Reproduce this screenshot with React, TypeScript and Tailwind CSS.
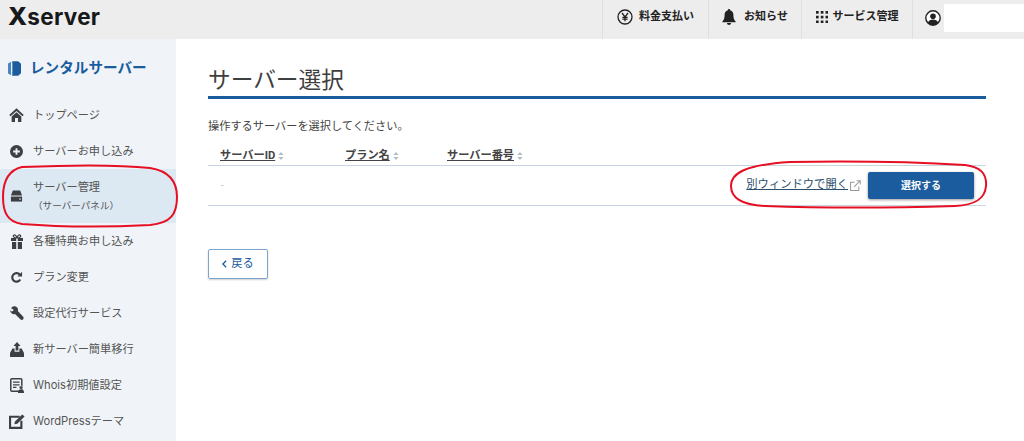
import React from 'react';

const FONT = "font-['Roboto','Noto_Sans_CJK_JP',sans-serif]";
const MENU_FONT = "font-['Inter','Noto_Sans_CJK_JP',sans-serif]";

function HomeIcon() {
  return (
    <svg viewBox="0 0 16 15" className="h-[14px] w-[15px]" fill="#3c4043">
      <path d="M8 .4 L15.8 7.4 L14.4 8.8 L8 3.2 L1.6 8.8 L.2 7.4 Z" />
      <path d="M2.8 9.2 L8 4.6 L13.2 9.2 V15 H9.6 V10.8 H6.4 V15 H2.8 Z" />
    </svg>
  );
}

function PlusIcon() {
  return (
    <svg viewBox="0 0 14 14" className="h-[13px] w-[13px]">
      <circle cx="7" cy="7" r="7" fill="#3c4043" />
      <path d="M7 3.4v7.2M3.4 7h7.2" stroke="#f0f4f8" strokeWidth="2" />
    </svg>
  );
}

function ServerIcon() {
  return (
    <svg viewBox="0 0 14 14" className="h-[14px] w-[13px]" fill="#3c4043">
      <path d="M3 1 H11 L13 6.4 H1 Z" />
      <path d="M1 7.6 H13 V13 H1 Z" />
      <rect x="10" y="9.6" width="1.6" height="1.4" fill="#dce8f2" />
    </svg>
  );
}

function GiftIcon() {
  return (
    <svg viewBox="0 0 14 15" className="h-[15px] w-[14px]" fill="#3c4043">
      <path d="M1 4 H6.2 V7 H1 Z M7.8 4 H13 V7 H7.8 Z M2 8 H6.2 V15 H2 Z M7.8 8 H12 V15 H7.8 Z" />
      <path d="M7 4 C4 4 2.8 2.6 3.6 1.4 C4.6 .2 6.4 1.4 7 4 C7.6 1.4 9.4 .2 10.4 1.4 C11.2 2.6 10 4 7 4 Z" fill="none" stroke="#3c4043" strokeWidth="1.2" />
    </svg>
  );
}

function RefreshIcon() {
  return (
    <svg viewBox="0 0 14 14" className="h-[13px] w-[13px]" fill="none">
      <path d="M11 9.2 A4.6 4.6 0 1 1 10.6 4" stroke="#3c4043" strokeWidth="2.4" />
      <path d="M8 5.8 H13 V.8 Z" fill="#3c4043" />
    </svg>
  );
}

function WrenchIcon() {
  return (
    <svg viewBox="0 0 14 14" className="h-[14px] w-[14px]" fill="#3c4043">
      <path d="M5.2 .3 A3.8 3.8 0 0 0 1 2.2 L3.4 3.6 L3.2 5 L1.8 5.6 L.2 4.2 A3.8 3.8 0 0 0 5 8 L10.6 13.6 C11.4 14.2 12.6 14 13.2 13.2 C13.8 12.4 13.8 11.4 13 10.6 L7.8 5 A3.8 3.8 0 0 0 5.2 .3 Z" />
    </svg>
  );
}

function UploadIcon() {
  return (
    <svg viewBox="0 0 14 15" className="h-[15px] w-[14px]" fill="#3c4043">
      <path d="M7 0 L10.6 4 H8.4 V8.6 H5.6 V4 H3.4 Z" />
      <path d="M2.4 6.6 H4.6 V9.8 H9.4 V6.6 H11.6 L14 11 V15 H0 V11 Z" />
    </svg>
  );
}

function WhoisIcon() {
  return (
    <svg viewBox="0 0 14 15" className="h-[15px] w-[14px]">
      <rect x=".8" y=".8" width="11" height="12.4" rx="1" fill="none" stroke="#3c4043" strokeWidth="1.5" />
      <path d="M3 4.2h6.6M3 6.8h6.6M3 9.4h3.4" stroke="#3c4043" strokeWidth="1.2" />
      <circle cx="11" cy="9.6" r="1.8" fill="#3c4043" stroke="#f0f4f8" strokeWidth=".5" />
      <path d="M8 15 C8 12 9.4 11.6 11 11.6 C12.6 11.6 14 12 14 15 Z" fill="#3c4043" />
    </svg>
  );
}

function EditIcon() {
  return (
    <svg viewBox="0 0 15 14" className="h-[15px] w-[16px]">
      <path d="M10 2.6 H1 V13 H11.6 V6.4" fill="none" stroke="#3c4043" strokeWidth="2" />
      <path d="M5 9.6 L5.6 7 L12.4 .4 L14.6 2.4 L7.8 9 Z" fill="#3c4043" />
    </svg>
  );
}

function YenIcon() {
  return (
    <svg viewBox="0 0 16 16" className="h-[16px] w-[16px]" fill="none" stroke="#222">
      <circle cx="8" cy="8" r="7" strokeWidth="1.3" />
      <path d="M5 4 L8 8 L11 4 M8 8 V12.2 M5.4 8.4 H10.6 M5.4 10.2 H10.6" strokeWidth="1.3" />
    </svg>
  );
}

function BellIcon() {
  return (
    <svg viewBox="0 0 14 16" className="h-[16px] w-[14px]" fill="#222">
      <path d="M7 0 C7.8 0 8.2 .6 8.2 1.3 C10.4 1.9 11.4 3.8 11.4 6 C11.4 9 12 10.8 13.6 12.4 V13.2 H.4 V12.4 C2 10.8 2.6 9 2.6 6 C2.6 3.8 3.6 1.9 5.8 1.3 C5.8 .6 6.2 0 7 0 Z" />
      <path d="M5 14 H9 C9 15.2 8.2 16 7 16 C5.8 16 5 15.2 5 14 Z" />
    </svg>
  );
}

function GridIcon() {
  const dots = [0, 5, 10];
  return (
    <svg viewBox="0 0 12.6 12.6" className="h-[12px] w-[12px]" fill="#222">
      {dots.map((y) => dots.map((x) => <rect key={`${x}-${y}`} x={x} y={y} width="2.8" height="2.8" />))}
    </svg>
  );
}

function UserIcon() {
  return (
    <svg viewBox="0 0 16 16" className="h-[16px] w-[16px]">
      <circle cx="8" cy="8" r="7.2" fill="#fff" stroke="#222" strokeWidth="1.4" />
      <circle cx="8" cy="6.2" r="2.8" fill="#222" />
      <path d="M2.8 13 C3.6 10.4 5.6 9.6 8 9.6 C10.4 9.6 12.4 10.4 13.2 13 C11.8 14.4 10 15 8 15 C6 15 4.2 14.4 2.8 13 Z" fill="#222" />
    </svg>
  );
}

function BookIcon() {
  return (
    <svg viewBox="0 0 14 16" className="h-[15px] w-[13px]">
      <path d="M4.6 .2 H11 L14 3 V13 L11 15.8 H4.6 Z" fill="#1b5c9e" />
      <path d="M0 2.6 L3.4 .6 V15.4 L0 13.4 Z" fill="#4d86bf" />
      <path d="M4 2.5v11" stroke="#fff" strokeWidth="1" strokeDasharray="1.4 1.2" />
    </svg>
  );
}

function ExternalIcon() {
  return (
    <svg viewBox="0 0 12 12" className="h-[11px] w-[11px]" fill="none" stroke="#9a9a9a" strokeWidth="1.1">
      <path d="M9.6 7v4.4H.6V2.4H5" />
      <path d="M4.4 7.6 L11 1 M7.2 .8 H11.2 V4.8" />
    </svg>
  );
}

function SortIcon() {
  return (
    <svg viewBox="0 0 6 9" className="ml-[3px] h-[8px] w-[6px]" fill="#b4bcc4">
      <path d="M3 0 L6 3.4 H0 Z M3 9 L0 5.6 H6 Z" />
    </svg>
  );
}

const menu = [
  { label: 'トップページ', icon: <HomeIcon /> },
  { label: 'サーバーお申し込み', icon: <PlusIcon /> },
  { label: 'サーバー管理', sub: '（サーバーパネル）', icon: <ServerIcon />, active: true },
  { label: '各種特典お申し込み', icon: <GiftIcon /> },
  { label: 'プラン変更', icon: <RefreshIcon /> },
  { label: '設定代行サービス', icon: <WrenchIcon /> },
  { label: '新サーバー簡単移行', icon: <UploadIcon /> },
  { label: 'Whois初期値設定', icon: <WhoisIcon /> },
  { label: 'WordPressテーマ', icon: <EditIcon /> },
];

const headerLinks = [
  { label: '料金支払い', icon: <YenIcon />, w: 'w-[106px]', gap: 'gap-[6px]' },
  { label: 'お知らせ', icon: <BellIcon />, w: 'w-[93px]', gap: 'gap-[8px]' },
  { label: 'サービス管理', icon: <GridIcon />, w: 'w-[111px]', gap: 'gap-[5px]' },
];

export default function App() {
  return (
    <div className={`${FONT} relative h-[441px] w-[1024px] overflow-hidden bg-white`}>
      <header className="flex h-[39px] items-center justify-between bg-[#ededed]">
        <div className="pb-[6px] pl-[8px] font-['Inter',sans-serif] text-[22.5px] font-bold leading-none tracking-[0.3px] text-[#16181a]">
          <span className="text-[25px] font-extrabold">X</span>server
        </div>
        <div className="flex h-full items-center">
          {headerLinks.map((l) => (
            <div key={l.label} className={`flex h-full items-center justify-center border-l border-[#dfdfdf] pb-[5px] text-[11px] font-bold text-[#222] ${l.w} ${l.gap}`}>
              {l.icon}
              <span>{l.label}</span>
            </div>
          ))}
          <div className="flex h-full w-[112px] items-center gap-[3px] border-l border-[#dfdfdf] pb-[3px] pl-[12px]">
            <UserIcon />
            <div className="h-[28px] flex-1 bg-white" />
          </div>
        </div>
      </header>

      <div className="flex h-[402px]">
        <aside className="w-[176px] shrink-0 bg-[#f0f4f8]">
          <div className="flex h-[58px] items-center gap-[9px] pl-[8px] text-[14.6px] font-bold text-[#1b5c9e]">
            <BookIcon />
            <span className="pt-[2px]">レンタルサーバー</span>
          </div>
          <nav className={MENU_FONT}>
            {menu.map((m) => (
              <div key={m.label} className={`flex items-center text-[11.2px] text-[#555] ${m.active ? 'h-[54px] bg-[#dce8f2]' : 'h-[36px]'}`}>
                <div className="flex w-[33px] shrink-0 justify-center">{m.icon}</div>
                <div>
                  <div className="leading-[18px]">{m.label}</div>
                  {m.sub && <div className="mt-[1px] text-[9.6px] leading-[18px]">{m.sub}</div>}
                </div>
              </div>
            ))}
          </nav>
        </aside>

        <main className="flex-1 pl-[32px] pr-[38px] pt-[27px]">
          <h1 className="h-[30px] pt-[1px] text-[22.7px] font-normal leading-[28px] text-[#3f3f3f]">サーバー選択</h1>
          <div className="h-[3px] bg-[#1b5c9e]" />
          <p className="mt-[20px] text-[11.2px] leading-[16px] text-[#444]">操作するサーバーを選択してください。</p>
          <div className="mt-[14px] flex h-[17px] items-center border-b border-[#c9d5e0] pb-[2px] text-[11.2px] font-bold text-[#444]">
            <div className="flex w-[137px] items-center pl-[12px]"><span className="underline">サーバーID</span><SortIcon /></div>
            <div className="flex w-[102px] items-center"><span className="underline">プラン名</span><SortIcon /></div>
            <div className="flex items-center"><span className="underline">サーバー番号</span><SortIcon /></div>
          </div>
          <div className="flex h-[40px] items-center justify-between border-b border-[#c9d5e0] pl-[13px] pr-[12px]">
            <span className="text-[8px] text-[#888]">-</span>
            <div className="flex items-center">
              <a className="text-[11.3px] text-[#2c4f6e] underline">別ウィンドウで開く</a>
              <span className="ml-[2px]"><ExternalIcon /></span>
              <button className="ml-[7px] h-[27px] w-[106px] rounded-[2px] bg-[#1b5c9e] text-[10px] font-bold text-white shadow-[0_1px_3px_rgba(0,0,0,0.4)]">選択する</button>
            </div>
          </div>
          <button className="mt-[43px] flex h-[30px] w-[60px] items-center justify-center gap-[4px] rounded-[2px] border border-[#7aa5cf] text-[11.2px] text-[#1b5c9e] shadow-[0_1px_2px_rgba(0,0,0,0.2)]">
            <svg viewBox="0 0 6 10" className="h-[8px] w-[5px]" fill="none" stroke="#1b5c9e" strokeWidth="1.6"><path d="M5 1 L1 5 L5 9" /></svg>
            <span>戻る</span>
          </button>
        </main>
      </div>

      <svg viewBox="0 0 1024 441" className="pointer-events-none absolute left-0 top-0 h-[441px] w-[1024px]" fill="none" stroke="#e60f23" strokeWidth="2">
        <path d="M22 167 C70 165 122 165 150 168 C169 171 177 181 177 197 C177 214 171 223 150 225 C110 227 60 227 22 224 C8 222 3 213 3 197 C3 180 9 170 22 167 Z" />
        <path d="M790 162 C850 161 915 162 965 165 C980 167 987 173 986 186 C985 199 975 205 955 206 C890 208 820 208 765 206 C743 205 731 198 731 186 C731 173 745 165 790 162 Z" />
      </svg>
    </div>
  );
}
